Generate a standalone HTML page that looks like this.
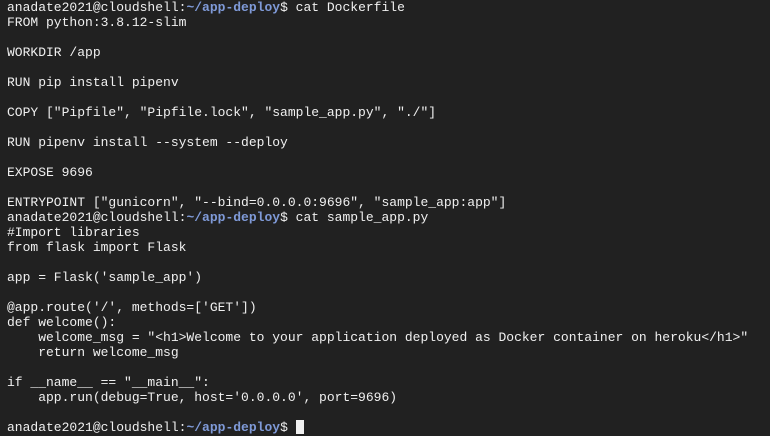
<!DOCTYPE html>
<html><head><style>
html,body{margin:0;padding:0;background:#212121;width:770px;height:436px;overflow:hidden}
pre{margin:0;padding:0 0 0 7px;font-family:"Liberation Mono",monospace;font-size:13px;line-height:15px;color:#f0f0f0;white-space:pre}
b{color:#7f9ad8;font-weight:bold}
.c{display:inline-block;width:8px;height:14px;background:#f0f0f0;vertical-align:-3px}
</style></head><body><pre>anadate2021@cloudshell:<b>~/app-deploy</b>$ cat Dockerfile
FROM python:3.8.12-slim

WORKDIR /app

RUN pip install pipenv

COPY ["Pipfile", "Pipfile.lock", "sample_app.py", "./"]

RUN pipenv install --system --deploy

EXPOSE 9696

ENTRYPOINT ["gunicorn", "--bind=0.0.0.0:9696", "sample_app:app"]
anadate2021@cloudshell:<b>~/app-deploy</b>$ cat sample_app.py
#Import libraries
from flask import Flask

app = Flask('sample_app')

@app.route('/', methods=['GET'])
def welcome():
    welcome_msg = "&lt;h1&gt;Welcome to your application deployed as Docker container on heroku&lt;/h1&gt;"
    return welcome_msg

if __name__ == "__main__":
    app.run(debug=True, host='0.0.0.0', port=9696)

anadate2021@cloudshell:<b>~/app-deploy</b>$ <span class="c"></span></pre></body></html>
